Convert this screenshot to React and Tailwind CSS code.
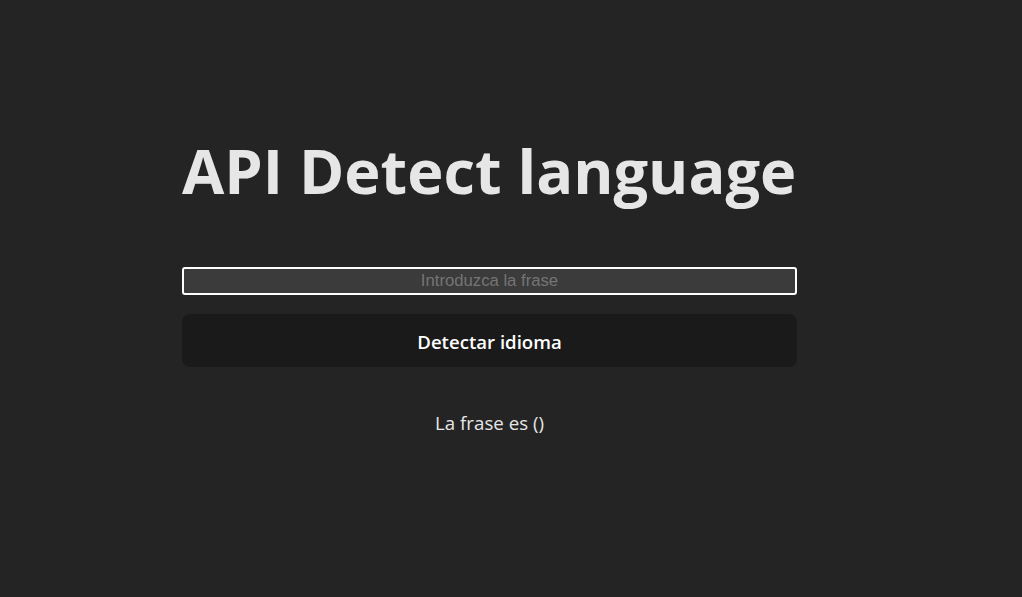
import React, { useState } from "react";

export default function App() {
  const [text, setText] = useState("");

  return (
    <div className="min-h-[597px] w-full bg-[#242424] text-[rgba(255,255,255,0.87)] font-['Open_Sans',sans-serif]">
      <div className="w-[615px] ml-[182px] pt-[137px] flex flex-col">
        <h1 className="text-[61.3px] leading-[1.1] font-bold text-[#e6e6e6] whitespace-nowrap">
          API Detect language
        </h1>

        <input
          type="text"
          value={text}
          onChange={(e) => setText(e.target.value)}
          placeholder="Introduzca la frase"
          className="mt-[63px] h-[28px] w-full rounded-[3px] border-2 border-white bg-[#3b3b3b] text-center text-[16.7px] text-white placeholder:text-[#757575] font-['Liberation_Sans',sans-serif] outline-none"
        />

        <button className="mt-[19px] h-[53px] w-full rounded-lg bg-[#1a1a1a] pt-[3px] text-[18.6px] font-semibold text-white">
          Detectar idioma
        </button>

        <p className="mt-[42px] text-center text-[18.7px] text-[#e6e6e6]">
          La frase es ()
        </p>
      </div>
    </div>
  );
}
